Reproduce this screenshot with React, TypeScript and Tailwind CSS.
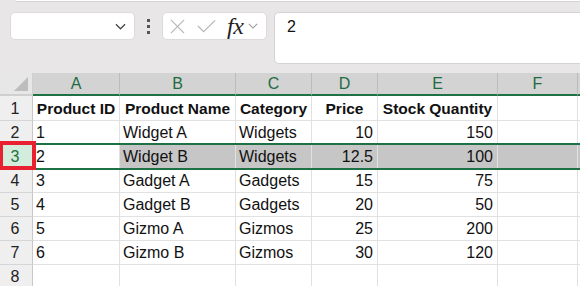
import React from "react";

const COLS = ["A", "B", "C", "D", "E", "F"];
const GRID = "grid grid-cols-[33px_87px_116px_76px_66px_120px_80px_1fr]";

type Row = { n: number; cells: string[] };

const rows: Row[] = [
  { n: 1, cells: ["Product ID", "Product Name", "Category", "Price", "Stock Quantity", ""] },
  { n: 2, cells: ["1", "Widget A", "Widgets", "10", "150", ""] },
  { n: 3, cells: ["2", "Widget B", "Widgets", "12.5", "100", ""] },
  { n: 4, cells: ["3", "Gadget A", "Gadgets", "15", "75", ""] },
  { n: 5, cells: ["4", "Gadget B", "Gadgets", "20", "50", ""] },
  { n: 6, cells: ["5", "Gizmo A", "Gizmos", "25", "200", ""] },
  { n: 7, cells: ["6", "Gizmo B", "Gizmos", "30", "120", ""] },
  { n: 8, cells: ["", "", "", "", "", ""] },
];

function Chevron({ className }: { className?: string }) {
  return (
    <svg viewBox="0 0 12 7" className={className} fill="none" stroke="currentColor" strokeWidth="1.3">
      <polyline points="1,1 6,6 11,1" />
    </svg>
  );
}

function FormulaBar() {
  return (
    <div className="h-[73px] bg-[#e8e6e7] flex flex-col">
      <div className="h-[2px] ml-[15px] bg-white border-b border-[#d6d4d5] rounded-bl-[3px]" />
      <div className="flex items-start pt-[10px] pl-[10px]">
        <div className="w-[125px] h-[28px] bg-white rounded-[5px] border border-[#dcdadb] flex items-center justify-end pr-[8px]">
          <Chevron className="w-[11px] h-[7px] text-[#444]" />
        </div>
        <div className="w-[27px] h-[28px] flex flex-col items-center justify-center gap-[3px]">
          <span className="w-[3px] h-[3px] bg-[#555]" />
          <span className="w-[3px] h-[3px] bg-[#555]" />
          <span className="w-[3px] h-[3px] bg-[#555]" />
        </div>
        <div className="w-[105px] h-[28px] bg-white rounded-[5px] border border-[#dcdadb] flex items-center pl-[7px]">
          <svg viewBox="0 0 16 16" className="w-[15px] h-[15px] text-[#b5b5b5]" fill="none" stroke="currentColor" strokeWidth="1.2">
            <line x1="1" y1="1" x2="15" y2="15" />
            <line x1="15" y1="1" x2="1" y2="15" />
          </svg>
          <svg viewBox="0 0 20 14" className="ml-[12px] w-[19px] h-[14px] text-[#b5b5b5]" fill="none" stroke="currentColor" strokeWidth="1.2">
            <polyline points="1,7 7,13 19,1" />
          </svg>
          <span className="ml-[11px] text-[24px] leading-[22px] italic text-[#222] font-['Liberation_Serif',serif] tracking-[-0.5px] pb-[1px]">
            fx
          </span>
          <Chevron className="ml-[5px] w-[10px] h-[6px] text-[#9a9a9a]" />
        </div>
        <div className="ml-[7px] flex-1 h-[52px] bg-white rounded-l-[5px] border border-r-0 border-[#d4d2d3] pl-[12px] pt-[2px]">
          <span className="text-[16px] leading-[24px] text-[#111]">2</span>
        </div>
      </div>
    </div>
  );
}

function HeaderRow() {
  return (
    <div className={GRID + " h-[23px]"}>
      <div className="bg-[#e7e7e7] border-r border-b-2 border-[#cfcfcf] relative">
        <svg viewBox="0 0 14 14" className="absolute right-[4px] bottom-[3px] w-[14px] h-[14px]">
          <polygon points="14,0 14,14 0,14" fill="#bdbdbd" />
        </svg>
      </div>
      {COLS.map((c) => (
        <div
          key={c}
          className="bg-[#d3d3d3] border-r border-r-[#bcbcbc] border-b-2 border-b-[#1e7145] flex items-center justify-center text-[16px] text-[#1e6b41] leading-[20px]"
        >
          {c}
        </div>
      ))}
      <div className="bg-[#d3d3d3] border-b-2 border-b-[#1e7145]" />
    </div>
  );
}

function DataRow({ row }: { row: Row }) {
  const first = row.n === 1;
  const sel = row.n === 3;
  const border = first ? "" : " border-t border-t-[#e1e1e1]";
  return (
    <div className={GRID + " h-[24px]"}>
      <div
        className={
          "border-r border-r-[#c8c8c8] text-center pr-[2px] text-[16px] leading-[22px] pt-[1px]" +
          (first ? " pt-[2px]" : " border-t border-t-[#d6d6d6]") +
          (sel ? " bg-[#d3ecdc] text-[#1e7145]" : " bg-[#efefef] text-[#222]")
        }
      >
        {row.n}
      </div>
      {row.cells.map((v, i) => {
        const numeric = !first && (i === 3 || i === 4);
        const align = first
          ? "text-center font-bold text-[15.5px]"
          : numeric
            ? "text-right pr-[4px] text-[16px]"
            : "text-left pl-[3px] text-[16px]";
        const bg = sel && i > 0 ? " bg-[#c6c6c6]" : " bg-white";
        return (
          <div
            key={i}
            className={
              "border-r border-r-[#e1e1e1] whitespace-nowrap overflow-hidden leading-[22px] text-[#111] " +
              align +
              bg +
              border +
              (first ? " pt-[2px]" : " pt-[1px]")
            }
          >
            {v}
          </div>
        );
      })}
      <div className={(sel ? "bg-[#c6c6c6]" : "bg-white") + border} />
    </div>
  );
}

export default function App() {
  return (
    <div className="w-[580px] h-[286px] overflow-hidden relative bg-white font-['Liberation_Sans',Arial,sans-serif]">
      <FormulaBar />
      <HeaderRow />
      {rows.map((r) => (
        <DataRow key={r.n} row={r} />
      ))}
      {/* row selection outline */}
      <div className="absolute left-[32px] right-0 top-[143px] h-[27px] border-y-2 border-[#1e7145] pointer-events-none" />
      {/* annotation box around row 3 header */}
      <div className="absolute left-0 top-[141px] w-[36px] h-[29px] border-[4px] border-l-[3px] border-[#e8202f] pointer-events-none" />
    </div>
  );
}
